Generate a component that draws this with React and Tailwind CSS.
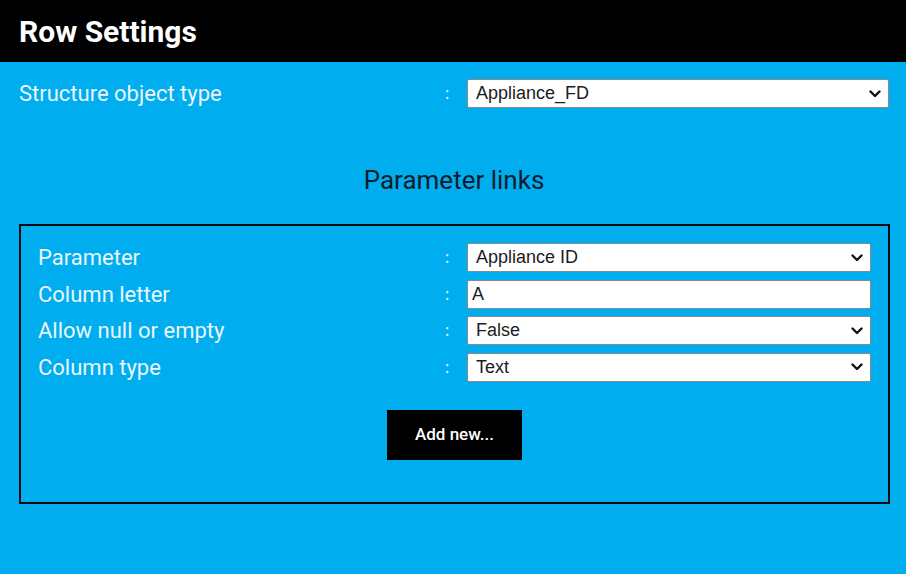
import React, { useState } from "react";

const labelFont = { fontFamily: "Roboto, 'Noto Sans', sans-serif" };

function Chevron() {
  return (
    <svg
      className="pointer-events-none absolute right-[8px] top-1/2 h-[10px] w-[12px] -translate-y-1/2"
      viewBox="0 0 12 10"
      fill="none"
    >
      <path d="M1.5 2.5 L6 7 L10.5 2.5" stroke="#111" strokeWidth="2.4" strokeLinecap="round" strokeLinejoin="round" />
    </svg>
  );
}

function SelectBox({ value, options, onChange }) {
  return (
    <div className="relative w-full">
      <select
        value={value}
        onChange={(e) => onChange(e.target.value)}
        className="h-[29px] w-full appearance-none rounded-[2px] border border-[#8a8a8a] bg-white py-0 pl-[8px] pr-8 text-[18px] leading-[27px] text-[#1c1c1c] outline-none font-['Liberation_Sans',Arial,sans-serif]"
      >
        {options.map((o) => (
          <option key={o}>{o}</option>
        ))}
      </select>
      <Chevron />
    </div>
  );
}

function Row({ label, labelWidth = "w-[407px]", children }) {
  return (
    <div className="flex h-[29px] items-center">
      <div className={`${labelWidth} shrink-0 text-[22px] leading-[29px] text-[#eaf6fd]`} style={labelFont}>
        {label}
      </div>
      <div className="w-[22px] shrink-0 text-[16px] leading-[29px] text-[#e6f6ff]">:</div>
      {children}
    </div>
  );
}

export default function App() {
  const [objectType, setObjectType] = useState("Appliance_FD");
  const [parameter, setParameter] = useState("Appliance ID");
  const [letter, setLetter] = useState("A");
  const [allowNull, setAllowNull] = useState("False");
  const [columnType, setColumnType] = useState("Text");

  return (
    <div className="min-h-screen bg-white">
      <div className="flex h-[574px] w-[906px] flex-col bg-[#00adef]">
        <div className="flex h-[62px] items-center bg-black pl-[19px]">
          <h1 className="text-[30px] font-bold text-white" style={labelFont}>
            Row Settings
          </h1>
        </div>

        <div className="pl-[19px] pr-[17px] pt-[17px]">
          {/* top level type */}
          <Row label="Structure object type" labelWidth="w-[426px]">
            <div className="w-[423px]">
              <SelectBox
                value={objectType}
                options={["Appliance_FD", "Appliance_GD", "Cable_FD"]}
                onChange={setObjectType}
              />
            </div>
          </Row>

          <h2 className="mt-[57px] text-center text-[26px] leading-[30px] text-[#0b1d2c]" style={labelFont}>
            Parameter links
          </h2>

          <div className="mt-[29px] h-[280px] w-[871px] border-2 border-[#050a10] px-[17px] pt-[17px]">
            <div className="flex flex-col gap-[7.5px]">
              <Row label="Parameter">
                <div className="w-[404px]">
                  <SelectBox
                    value={parameter}
                    options={["Appliance ID", "Name", "Location"]}
                    onChange={setParameter}
                  />
                </div>
              </Row>
              <Row label="Column letter">
                <input
                  value={letter}
                  onChange={(e) => setLetter(e.target.value)}
                  className="h-[29px] w-[404px] rounded-[2px] border border-[#8a8a8a] bg-white px-[4px] text-[18px] text-[#1c1c1c] outline-none font-['Liberation_Sans',Arial,sans-serif]"
                />
              </Row>
              <Row label="Allow null or empty">
                <div className="w-[404px]">
                  <SelectBox value={allowNull} options={["False", "True"]} onChange={setAllowNull} />
                </div>
              </Row>
              <Row label="Column type">
                <div className="w-[404px]">
                  <SelectBox
                    value={columnType}
                    options={["Text", "Number", "Date"]}
                    onChange={setColumnType}
                  />
                </div>
              </Row>
            </div>

            <div className="mt-[28px] flex justify-center">
              <button
                type="button"
                className="h-[50px] w-[135px] bg-black text-[17px] font-medium text-white"
                style={labelFont}
              >
                Add new...
              </button>
            </div>
          </div>
        </div>
      </div>
    </div>
  );
}
